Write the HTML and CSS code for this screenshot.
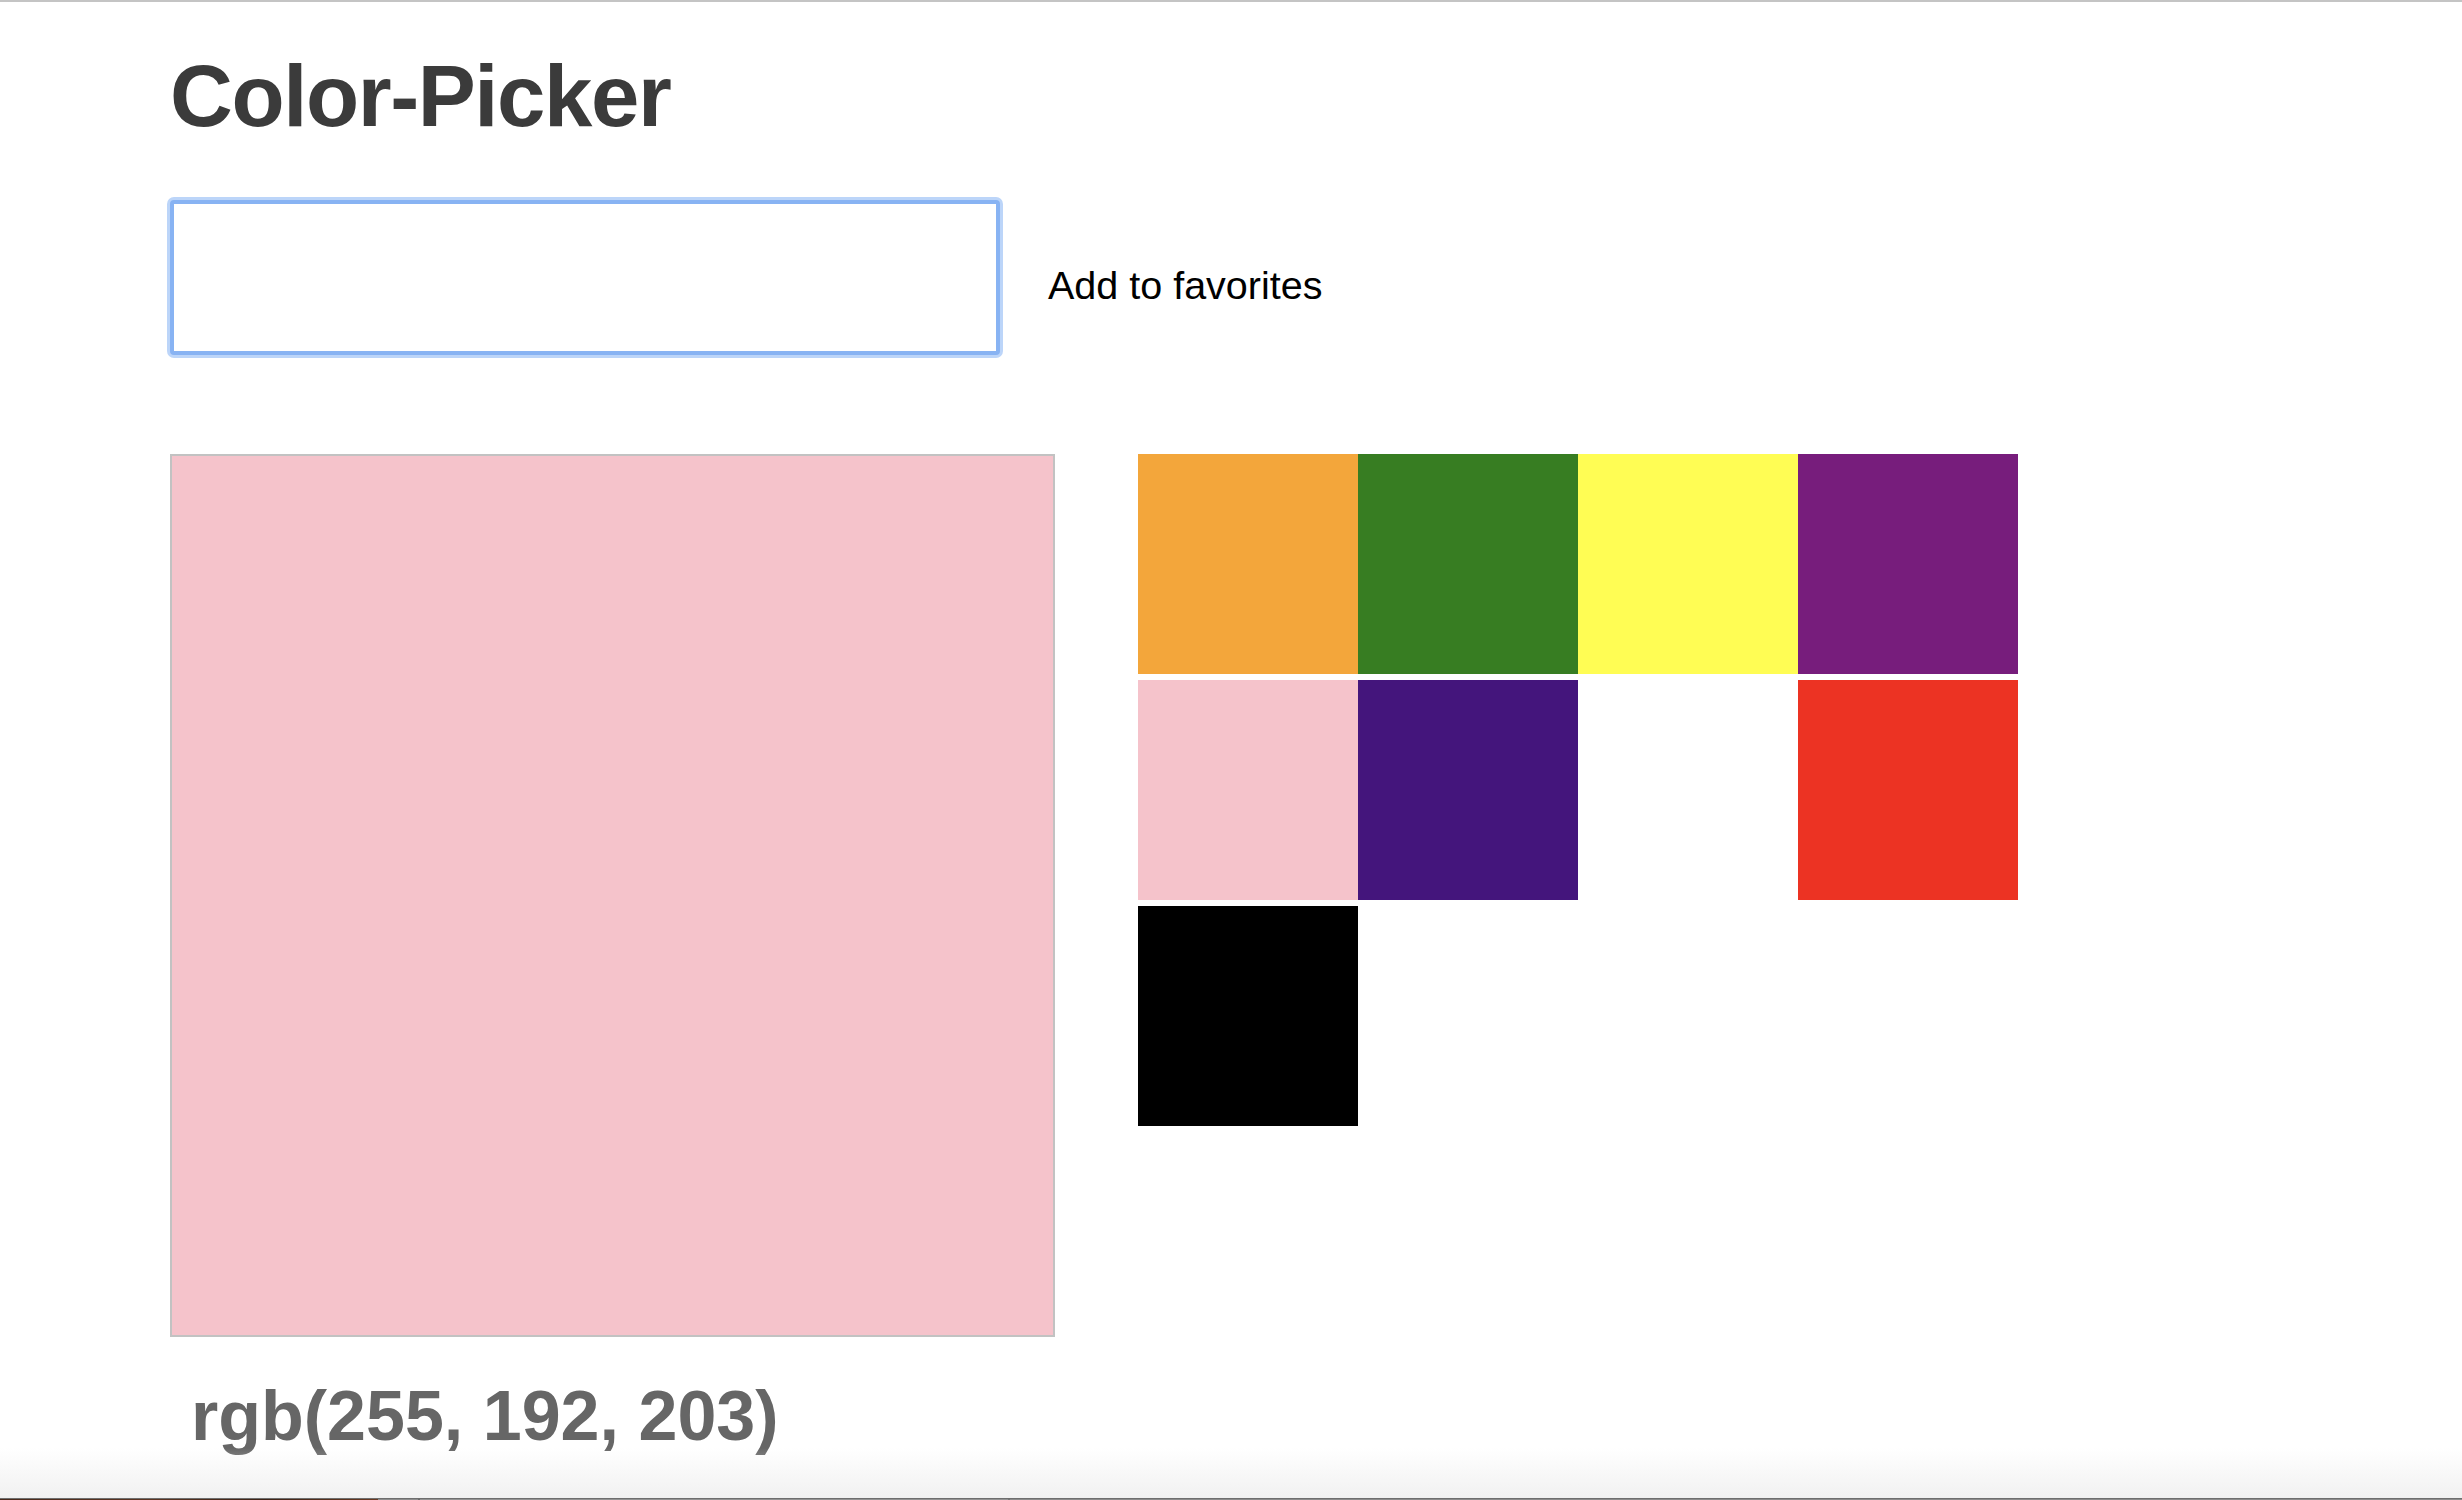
FILE: index.html
```html
<!DOCTYPE html>
<html>
<head>
<meta charset="utf-8">
<link rel="stylesheet" href="styles.css">
</head>
<body>
<div class="page">
  <h1 class="title">Color-Picker</h1>
  <div class="controls">
    <input class="color-input" type="text">
    <span class="fav-label">Add to favorites</span>
  </div>
  <div class="main">
    <div class="preview-col">
      <div class="preview"></div>
      <div class="rgb">rgb(255, 192, 203)</div>
    </div>
    <div class="favorites">
      <div class="tile orange"></div>
      <div class="tile green"></div>
      <div class="tile yellow"></div>
      <div class="tile purple"></div>
      <div class="tile pink"></div>
      <div class="tile indigo"></div>
      <div class="tile white"></div>
      <div class="tile red"></div>
      <div class="tile black"></div>
    </div>
  </div>
</div>
<div class="window-fade"></div>
<div class="desktop-strip">
  <div class="strip-wood"></div>
  <div class="strip-gap"></div>
  <div class="strip-a"></div>
  <div class="strip-b"></div>
</div>
</body>
</html>
```
FILE: styles.css
```css
html, body {
  margin: 0;
  padding: 0;
  background: #ffffff;
  height: 1500px;
  overflow: hidden;
}
body {
  border-top: 2px solid #c4c4c4;
  box-sizing: border-box;
  position: relative;
  font-family: "Liberation Sans", Arial, sans-serif;
}
.page {
  padding-left: 170px;
}
.title {
  margin: 0;
  padding-top: 44px;
  font-size: 87px;
  line-height: 100px;
  font-weight: bold;
  color: #3b3b3b;
  letter-spacing: -1.4px;
}
.controls {
  display: flex;
  align-items: center;
  margin-top: 54px;
  height: 155px;
}
.color-input {
  box-sizing: border-box;
  width: 830px;
  height: 155px;
  margin: 0;
  border: 4px solid #88b3f3;
  border-radius: 4px;
  box-shadow: 0 0 0 3px #bcd5f9;
  outline: none;
  background: #fff;
  font-size: 40px;
}
.fav-label {
  margin-left: 48px;
  margin-top: 16px;
  font-size: 39.5px;
  color: #000;
}
.main {
  display: flex;
  margin-top: 99px;
}
.preview-col {
  display: flex;
  flex-direction: column;
}
.preview {
  box-sizing: border-box;
  width: 885px;
  height: 883px;
  border: 2px solid #c2c2c2;
  background: #f5c3cb;
}
.rgb {
  margin-top: 39px;
  padding-left: 21px;
  font-size: 70px;
  line-height: 80px;
  font-weight: bold;
  color: #666666;
}
.favorites {
  margin-left: 83px;
  display: grid;
  grid-template-columns: repeat(4, 220px);
  grid-auto-rows: 220px;
  row-gap: 6px;
  align-content: start;
}
.tile { width: 220px; height: 220px; }
.orange { background: #f3a63b; }
.green { background: #377d22; }
.yellow { background: #fffd54; }
.purple { background: #771d7c; }
.pink { background: #f5c3cb; }
.indigo { background: #44157c; }
.white { background: #ffffff; }
.red { background: #ec3323; }
.black { background: #000000; }

.window-fade {
  position: absolute;
  left: 0;
  right: 0;
  top: 1446px;
  height: 50px;
  background: linear-gradient(to bottom, rgba(255,255,255,0), rgba(240,240,240,0.92));
}
.desktop-strip {
  position: absolute;
  left: 0;
  right: 0;
  top: 1496px;
  height: 4px;
  display: flex;
  border-top: 1px solid #6e6e6e;
  box-sizing: border-box;
}
.strip-wood {
  width: 378px;
  background: linear-gradient(to right, #4a2a1c, #5c3522 40%, #3e2316 70%, #6a3a22);
}
.strip-gap {
  width: 40px;
  background: #8e8e8e;
  border-right: 2px solid #6a6a6a;
}
.strip-a {
  width: 588px;
  background: #939393;
  border-right: 2px solid #777;
}
.strip-b {
  flex: 1;
  background: #8c8c8c;
}
```
